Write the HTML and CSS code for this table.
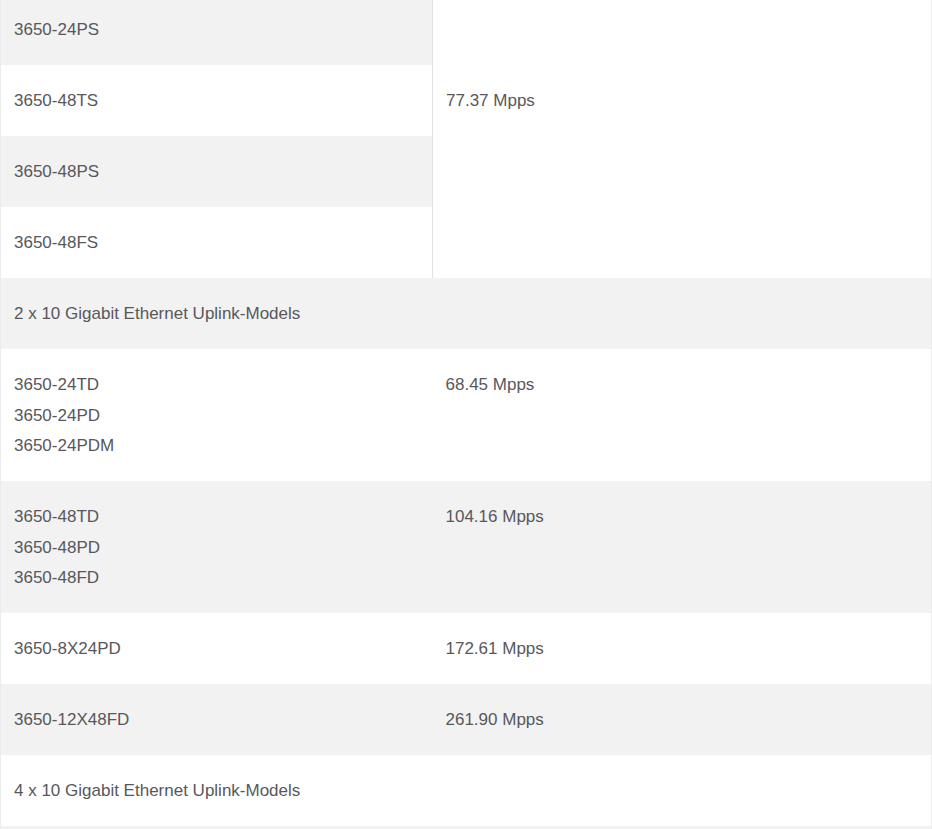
FILE: index.html
```html
<!DOCTYPE html>
<html>
<head>
<meta charset="utf-8">
<link rel="stylesheet" href="styles.css">
</head>
<body>
<table class="spec">
  <tbody>
    <tr class="alt first"><td class="model">3650-24PS</td><td class="merged" rowspan="4">77.37 Mpps</td></tr>
    <tr><td class="model">3650-48TS</td></tr>
    <tr class="alt"><td class="model">3650-48PS</td></tr>
    <tr><td class="model">3650-48FS</td></tr>
    <tr class="alt"><td colspan="2">2 x 10 Gigabit Ethernet Uplink-Models</td></tr>
    <tr><td class="model">3650-24TD<br>3650-24PD<br>3650-24PDM</td><td>68.45 Mpps</td></tr>
    <tr class="alt"><td class="model">3650-48TD<br>3650-48PD<br>3650-48FD</td><td>104.16 Mpps</td></tr>
    <tr><td class="model">3650-8X24PD</td><td>172.61 Mpps</td></tr>
    <tr class="alt"><td class="model">3650-12X48FD</td><td>261.90 Mpps</td></tr>
    <tr><td colspan="2">4 x 10 Gigabit Ethernet Uplink-Models</td></tr>
    <tr class="alt"><td class="filler" colspan="2"></td></tr>
  </tbody>
</table>
</body>
</html>
```

FILE: styles.css
```css
html, body {
  margin: 0;
  padding: 0;
  background: #ffffff;
  overflow: hidden;
}

.spec {
  width: 932px;
  margin-top: -6px;
  border-collapse: collapse;
  table-layout: fixed;
  font-family: "Liberation Sans", Arial, sans-serif;
  font-size: 17px;
  color: #58585b;
  border-left: 1px solid #ececec;
  border-right: 1px solid #ececec;
}

.spec td {
  padding: 21px 13px 19.5px 13px;
  line-height: 30.5px;
  vertical-align: top;
  text-align: left;
}

.spec td.model {
  width: 405px;
}

.spec td.merged {
  padding-top: 92px;
  background: #ffffff;
  border-left: 1px solid #e2e2e2;
}

.spec td.filler {
  height: 30px;
}

.spec tr {
  background: #ffffff;
}

.spec tr.alt {
  background: #f2f2f2;
}
```
